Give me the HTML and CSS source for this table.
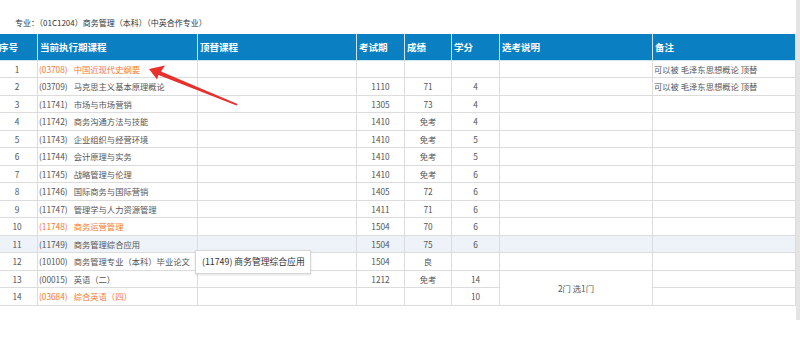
FILE: index.html
```html
<!DOCTYPE html>
<html lang="zh">
<head>
<meta charset="utf-8">
<link rel="stylesheet" href="styles.css">
</head>
<body>
<div class="page">
  <div class="title">专业：（01C1204）商务管理（本科）（中英合作专业）</div>
  <table class="plan">
    <colgroup>
      <col class="c-no"><col class="c-course"><col class="c-sub"><col class="c-exam"><col class="c-score"><col class="c-credit"><col class="c-opt"><col class="c-note">
    </colgroup>
    <thead>
      <tr><th>序号</th><th>当前执行期课程</th><th>顶替课程</th><th>考试期</th><th>成绩</th><th>学分</th><th>选考说明</th><th>备注</th></tr>
    </thead>
    <tbody>
      <tr><td class="n">1</td><td class="orange"><span class="code">(03708)</span>中国近现代史纲要</td><td></td><td></td><td></td><td></td><td></td><td>可以被 毛泽东思想概论 顶替</td></tr>
      <tr><td class="n">2</td><td><span class="code">(03709)</span>马克思主义基本原理概论</td><td></td><td class="n">1110</td><td class="n">71</td><td class="n">4</td><td></td><td>可以被 毛泽东思想概论 顶替</td></tr>
      <tr><td class="n">3</td><td><span class="code">(11741)</span>市场与市场营销</td><td></td><td class="n">1305</td><td class="n">73</td><td class="n">4</td><td></td><td></td></tr>
      <tr><td class="n">4</td><td><span class="code">(11742)</span>商务沟通方法与技能</td><td></td><td class="n">1410</td><td class="n">免考</td><td class="n">4</td><td></td><td></td></tr>
      <tr><td class="n">5</td><td><span class="code">(11743)</span>企业组织与经营环境</td><td></td><td class="n">1410</td><td class="n">免考</td><td class="n">5</td><td></td><td></td></tr>
      <tr><td class="n">6</td><td><span class="code">(11744)</span>会计原理与实务</td><td></td><td class="n">1410</td><td class="n">免考</td><td class="n">5</td><td></td><td></td></tr>
      <tr><td class="n">7</td><td><span class="code">(11745)</span>战略管理与伦理</td><td></td><td class="n">1410</td><td class="n">免考</td><td class="n">6</td><td></td><td></td></tr>
      <tr><td class="n">8</td><td><span class="code">(11746)</span>国际商务与国际营销</td><td></td><td class="n">1405</td><td class="n">72</td><td class="n">6</td><td></td><td></td></tr>
      <tr><td class="n">9</td><td><span class="code">(11747)</span>管理学与人力资源管理</td><td></td><td class="n">1411</td><td class="n">71</td><td class="n">6</td><td></td><td></td></tr>
      <tr><td class="n">10</td><td class="orange"><span class="code">(11748)</span>商务运营管理</td><td></td><td class="n">1504</td><td class="n">70</td><td class="n">6</td><td></td><td></td></tr>
      <tr class="hover"><td class="n">11</td><td><span class="code">(11749)</span>商务管理综合应用</td><td></td><td class="n">1504</td><td class="n">75</td><td class="n">6</td><td></td><td></td></tr>
      <tr><td class="n">12</td><td><span class="code">(10100)</span>商务管理专业（本科）毕业论文</td><td></td><td class="n">1504</td><td class="n">良</td><td class="n"></td><td></td><td></td></tr>
      <tr><td class="n">13</td><td><span class="code">(00015)</span>英语（二）</td><td></td><td class="n">1212</td><td class="n">免考</td><td class="n">14</td><td class="n" rowspan="2">2门 选1门</td><td></td></tr>
      <tr><td class="n">14</td><td class="orange"><span class="code">(03684)</span>综合英语（四）</td><td></td><td class="n"></td><td class="n"></td><td class="n">10</td><td></td></tr>
    </tbody>
  </table>
</div>
<div class="tooltip">(11749) 商务管理综合应用</div>
<svg class="arrow" width="800" height="340" viewBox="0 0 800 340">
  <polygon points="149,69 165,65.5 161,71.5 237.5,104 236.5,105.5 158.5,75 157,79.5" fill="#e8302c"/>
</svg>
<div class="scrollbar"></div>
</body>
</html>
```

FILE: styles.css
```css
html, body {
  margin: 0;
  padding: 0;
  background: #fff;
}
body {
  width: 800px;
  height: 340px;
  overflow: hidden;
  position: relative;
  font-family: "Noto Sans CJK SC", "Noto Sans", sans-serif;
  color: #555;
}
.page {
  padding-top: 17px;
}
.title {
  font-size: 8px;
  line-height: 12px;
  color: #333;
  padding-left: 15px;
  margin-bottom: 5px;
}
.plan {
  margin-left: -4px;
  width: 799px;
  table-layout: fixed;
  border-collapse: collapse;
  font-size: 8.3px;
}
.c-no { width: 41px; }
.c-course { width: 160px; }
.c-sub { width: 159px; }
.c-exam { width: 48px; }
.c-score { width: 47px; }
.c-credit { width: 48px; }
.c-opt { width: 153px; }
.c-note { width: 143px; }
.plan th {
  background: #0a80c3;
  color: #fff;
  font-size: 9.5px;
  font-weight: bold;
  text-align: left;
  height: 24.5px;
  padding: 0 2px;
  border: 1px solid #cfe4f2;
  border-top-color: #0a80c3;
  white-space: nowrap;
}
.plan td {
  height: 16.5px;
  padding: 0 1px;
  border: 1px solid #dcdcdc;
  white-space: nowrap;
  overflow: hidden;
  line-height: 12px;
}
.plan td.n {
  text-align: center;
}
.plan .orange {
  color: #f37b35;
}
.code {
  margin-right: 6px;
}
.plan tr.hover td {
  background: #edf3f8;
}
.tooltip {
  position: absolute;
  left: 195px;
  top: 250px;
  width: 108px;
  height: 22px;
  padding: 0 0 0 6px;
  background: #fff;
  border: 1px solid #d6d6d6;
  box-shadow: 0 1px 2px rgba(0,0,0,0.12);
  font-size: 8.8px;
  line-height: 22px;
  color: #333;
  white-space: nowrap;
}
.arrow {
  position: absolute;
  left: 0;
  top: 0;
}
.scrollbar {
  position: absolute;
  right: 0;
  top: 0;
  width: 4px;
  height: 320px;
  background: #e4e4e4;
}
```
